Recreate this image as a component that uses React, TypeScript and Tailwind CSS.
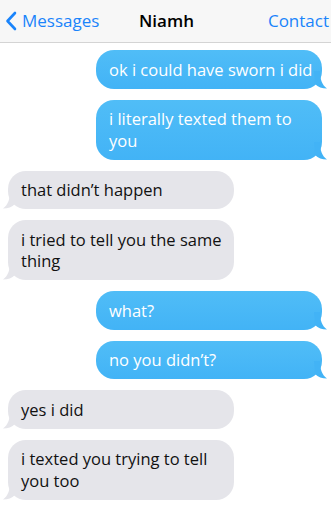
import React from "react";

type Msg = { from: "me" | "them"; text: string };

const msgs: Msg[] = [
  { from: "me", text: "ok i could have sworn i did" },
  { from: "me", text: "i literally texted them to you" },
  { from: "them", text: "that didn\u2019t happen" },
  { from: "them", text: "i tried to tell you the same thing" },
  { from: "me", text: "what?" },
  { from: "me", text: "no you didn\u2019t?" },
  { from: "them", text: "yes i did" },
  { from: "them", text: "i texted you trying to tell you too" },
];

function Tail({ side, color }: { side: "left" | "right"; color: string }) {
  if (side === "right") {
    return (
      <svg
        className="absolute bottom-0 right-[-6px]"
        width="14"
        height="18"
        viewBox="0 0 14 18"
      >
        <path d="M0 0 L6 0 C6 8 8 14 13 17.5 C8 17.5 4 16 1 13 Z" fill={color} />
      </svg>
    );
  }
  return (
    <svg
      className="absolute bottom-0 left-[-6px]"
      width="14"
      height="18"
      viewBox="0 0 14 18"
    >
      <path d="M14 0 L8 0 C8 8 6 14 1 17.5 C6 17.5 10 16 13 13 Z" fill={color} />
    </svg>
  );
}

export default function App() {
  return (
    <div
      className="w-[331px] h-[507px] bg-white overflow-hidden"
      style={{ fontFamily: '"Open Sans", sans-serif' }}
    >
      <div className="h-[43px] bg-[#f7f7f7] border-b border-[#d4d4d4] flex items-center relative">
        <div className="flex items-center pl-[5px] text-[#1a84fb] text-[17px]">
          <svg width="12" height="20" viewBox="0 0 12 20" className="mr-[5px]">
            <path d="M10 2 L2.5 10 L10 18" stroke="#1a84fb" strokeWidth="2.6" fill="none" strokeLinecap="round" strokeLinejoin="round" />
          </svg>
          <span>Messages</span>
        </div>
        <div className="absolute left-[139px] text-[17px] font-semibold text-black">Niamh</div>
        <div className="absolute right-[2px] text-[17px] text-[#1a84fb] whitespace-nowrap">Contact</div>
      </div>
      <div className="flex flex-col gap-[11px] pt-[7px] px-[8px]">
        {msgs.map((m, i) => (
          <div key={i} className={m.from === "me" ? "flex justify-end pr-[1px]" : "flex justify-start"}>
            <div
              className={
                m.from === "me"
                  ? "relative w-[226px] rounded-[18px] bg-gradient-to-b from-[#50bdf7] to-[#42b3f6] text-white text-[16.5px] leading-[21.5px] pl-[13px] pr-[8px] py-[8.5px]"
                  : "relative w-[226px] rounded-[18px] bg-[#e5e5ea] text-[#111] text-[16.5px] leading-[21.5px] pl-[13px] pr-[8px] py-[8.5px]"
              }
            >
              <Tail side={m.from === "me" ? "right" : "left"} color={m.from === "me" ? "#42b3f6" : "#e5e5ea"} />
              <span className="relative">{m.text}</span>
            </div>
          </div>
        ))}
      </div>
    </div>
  );
}
